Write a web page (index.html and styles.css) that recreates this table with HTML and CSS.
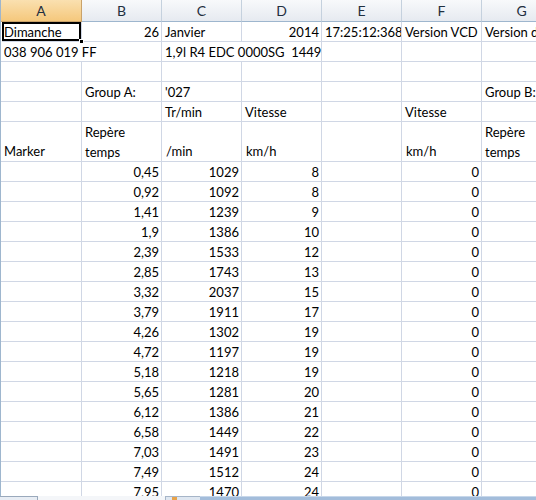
FILE: index.html
```html
<!DOCTYPE html>
<html>
<head>
<meta charset="utf-8">
<link rel="stylesheet" href="styles.css">
</head>
<body>
<div class="window">
  <div class="sheet">
    <div class="grid">
      <div class="c h hs">A</div><div class="c h">B</div><div class="c h">C</div><div class="c h">D</div><div class="c h">E</div><div class="c h">F</div><div class="c h">G</div>

      <div class="c sel">Dimanche</div><div class="c r">26</div><div class="c">Janvier</div><div class="c r">2014</div><div class="c clip">17:25:12:3687</div><div class="c">Version VCD</div><div class="c">Version de</div>

      <div class="c span2">038 906 019 FF</div><div class="c span2">1,9l R4 EDC 0000SG&nbsp; 1449</div><div class="c"></div><div class="c"></div><div class="c"></div>

      <div class="c"></div><div class="c"></div><div class="c"></div><div class="c"></div><div class="c"></div><div class="c"></div><div class="c"></div>

      <div class="c"></div><div class="c">Group A:</div><div class="c">'027</div><div class="c"></div><div class="c"></div><div class="c"></div><div class="c">Group B:</div>

      <div class="c"></div><div class="c"></div><div class="c">Tr/min</div><div class="c">Vitesse</div><div class="c"></div><div class="c">Vitesse</div><div class="c"></div>

      <div class="c low">Marker</div><div class="c wrap">Repère temps</div><div class="c low ind">/min</div><div class="c low ind">km/h</div><div class="c"></div><div class="c low ind">km/h</div><div class="c wrap">Repère temps</div>

      <div class="c"></div><div class="c r">0,45</div><div class="c r">1029</div><div class="c r">8</div><div class="c"></div><div class="c r">0</div><div class="c"></div>
      <div class="c"></div><div class="c r">0,92</div><div class="c r">1092</div><div class="c r">8</div><div class="c"></div><div class="c r">0</div><div class="c"></div>
      <div class="c"></div><div class="c r">1,41</div><div class="c r">1239</div><div class="c r">9</div><div class="c"></div><div class="c r">0</div><div class="c"></div>
      <div class="c"></div><div class="c r">1,9</div><div class="c r">1386</div><div class="c r">10</div><div class="c"></div><div class="c r">0</div><div class="c"></div>
      <div class="c"></div><div class="c r">2,39</div><div class="c r">1533</div><div class="c r">12</div><div class="c"></div><div class="c r">0</div><div class="c"></div>
      <div class="c"></div><div class="c r">2,85</div><div class="c r">1743</div><div class="c r">13</div><div class="c"></div><div class="c r">0</div><div class="c"></div>
      <div class="c"></div><div class="c r">3,32</div><div class="c r">2037</div><div class="c r">15</div><div class="c"></div><div class="c r">0</div><div class="c"></div>
      <div class="c"></div><div class="c r">3,79</div><div class="c r">1911</div><div class="c r">17</div><div class="c"></div><div class="c r">0</div><div class="c"></div>
      <div class="c"></div><div class="c r">4,26</div><div class="c r">1302</div><div class="c r">19</div><div class="c"></div><div class="c r">0</div><div class="c"></div>
      <div class="c"></div><div class="c r">4,72</div><div class="c r">1197</div><div class="c r">19</div><div class="c"></div><div class="c r">0</div><div class="c"></div>
      <div class="c"></div><div class="c r">5,18</div><div class="c r">1218</div><div class="c r">19</div><div class="c"></div><div class="c r">0</div><div class="c"></div>
      <div class="c"></div><div class="c r">5,65</div><div class="c r">1281</div><div class="c r">20</div><div class="c"></div><div class="c r">0</div><div class="c"></div>
      <div class="c"></div><div class="c r">6,12</div><div class="c r">1386</div><div class="c r">21</div><div class="c"></div><div class="c r">0</div><div class="c"></div>
      <div class="c"></div><div class="c r">6,58</div><div class="c r">1449</div><div class="c r">22</div><div class="c"></div><div class="c r">0</div><div class="c"></div>
      <div class="c"></div><div class="c r">7,03</div><div class="c r">1491</div><div class="c r">23</div><div class="c"></div><div class="c r">0</div><div class="c"></div>
      <div class="c"></div><div class="c r">7,49</div><div class="c r">1512</div><div class="c r">24</div><div class="c"></div><div class="c r">0</div><div class="c"></div>
      <div class="c"></div><div class="c r">7,95</div><div class="c r">1470</div><div class="c r">24</div><div class="c"></div><div class="c r">0</div><div class="c"></div>
    </div>
  </div>
  <div class="tabbar">
    <div class="nav"></div>
    <div class="gap"></div>
    <div class="newtab"><span class="ico"></span></div>
    <div class="rest"></div>
  </div>
</div>
</body>
</html>
```

FILE: styles.css
```css
html, body {
  margin: 0;
  padding: 0;
  background: #ffffff;
}

.window {
  width: 536px;
  height: 500px;
  overflow: hidden;
  display: flex;
  flex-direction: column;
  font-family: Lato, "Open Sans", sans-serif;
  font-size: 13px;
  color: #000;
}

.sheet {
  height: 496px;
  overflow: hidden;
  border-left: 1px solid #9eb6ce;
  box-sizing: border-box;
  flex: none;
}

.grid {
  display: grid;
  width: max-content;
  grid-template-columns: 81px repeat(6, 80px);
  grid-template-rows: 22px 20px 20px 20px 20px 20px 40px;
  grid-auto-rows: 20px;
}

.c {
  box-sizing: border-box;
  border-right: 1px solid #d0d7e5;
  border-bottom: 1px solid #d0d7e5;
  display: block;
  text-align: left;
  padding: 1px 2px 0 3px;
  line-height: 19px;
  white-space: nowrap;
  position: relative;
}

.r {
  text-align: right;
}

.clip {
  overflow: hidden;
}

.span2 {
  grid-column: span 2;
}

.low {
  padding-top: 20px;
}

.ind {
  padding-left: 4px;
}

.wrap {
  white-space: normal;
  line-height: 20px;
  padding-top: 0;
}

.h {
  text-align: center;
  padding: 0;
  line-height: 21px;
  background: linear-gradient(#f8f9fb, #e6eaf0);
  border-right: 1px solid #c5d1de;
  border-bottom: 1px solid #9eb6ce;
  color: #1f2f3f;
  font-size: 14px;
}

.hs {
  background: linear-gradient(#fae0b0, #f5c87c);
  border-right-color: #c9a26a;
  border-bottom-color: #c9a26a;
}

.sel {
  box-shadow: inset 0 0 0 2px #000;
  margin-left: 1px;
  padding-left: 2px;
}

.sel::after {
  content: "";
  position: absolute;
  right: -3px;
  bottom: -3px;
  width: 5px;
  height: 5px;
  background: #000;
  border: 1px solid #fff;
  box-sizing: border-box;
  z-index: 2;
}

.tabbar {
  height: 4px;
  display: flex;
  flex: none;
}

.nav {
  width: 38px;
  background: #e8edf4;
  border-top: 1px solid #9aa9bc;
  border-right: 1px solid #9aa9bc;
  box-sizing: border-box;
}

.gap {
  width: 127px;
  background: #f4f6f9;
}

.newtab {
  width: 35px;
  background: #dfe7f1;
  border-top: 1px solid #a6b5c8;
  border-left: 1px solid #a6b5c8;
  box-sizing: border-box;
  padding-left: 6px;
}

.ico {
  display: block;
  width: 5px;
  height: 3px;
  background: #e8a34a;
}

.rest {
  flex: 1;
  background: #a3bddb;
  border-top: 1px solid #c7d7ea;
  box-sizing: border-box;
}
```
